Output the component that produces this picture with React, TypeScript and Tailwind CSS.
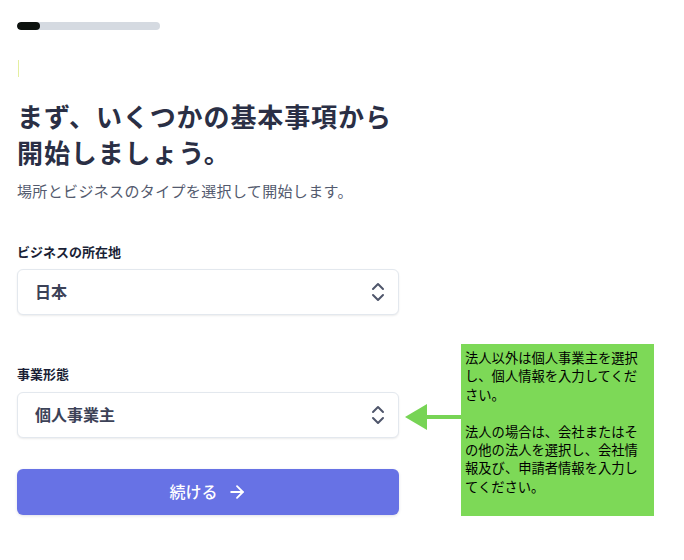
import { ArrowRight, ChevronsUpDown } from 'lucide-react';

const jp = "font-['Inter','Noto_Sans_CJK_JP',sans-serif]";

function SelectBox({ value }: { value: string }) {
  return (
    <div className="h-[46px] w-full rounded-md border border-[#e3e8ee] bg-white shadow-[0_1px_2px_rgba(0,0,0,0.08)] flex items-center justify-between pl-[17px] pr-[8px]">
      <span className="text-[16px] font-semibold text-[#3c4257]">{value}</span>
      <ChevronsUpDown className="w-[24px] h-[24px] text-[#4f566b]" strokeWidth={2} />
    </div>
  );
}

export default function App() {
  return (
    <div className={`relative w-[684px] h-[560px] bg-white overflow-hidden ${jp}`}>
      <div className="ml-[17px] w-[382px] pt-[22px] flex flex-col">
        {/* progress */}
        <div className="h-2 w-[143px] rounded-full bg-[#d5dae1] overflow-hidden">
          <div className="h-full w-[23px] rounded-full bg-[#0d120e]" />
        </div>

        <div className="mt-[30px] ml-px h-[17px] w-px bg-[#e4efa0]" />

        <h1 className="mt-[23px] text-[26px] leading-[36px] font-bold text-[#2a2f45] tracking-[0.9px]">
          まず、いくつかの基本事項から<br />開始しましょう。
        </h1>
        <p className="mt-[9px] text-[15px] leading-[22px] text-[#535a6e] tracking-[0.35px]">
          場所とビジネスのタイプを選択して開始します。
        </p>

        <label className="mt-[39px] text-[13px] leading-[20px] font-bold text-[#1a1f36]">ビジネスの所在地</label>
        <div className="mt-[7px]">
          <SelectBox value="日本" />
        </div>

        <label className="mt-[49px] text-[13px] leading-[20px] font-bold text-[#1a1f36]">事業形態</label>
        <div className="mt-2">
          <SelectBox value="個人事業主" />
        </div>

        <button className="mt-[31px] h-[46px] w-full rounded-md bg-[#6772e5] shadow-[0_1px_3px_rgba(50,50,93,0.15)] flex items-center justify-center gap-[9px] text-white text-[16px] font-medium">
          <span>続ける</span>
          <ArrowRight className="w-[20px] h-[20px]" strokeWidth={2.2} />
        </button>
      </div>

      {/* annotation arrow */}
      <svg className="absolute left-[404px] top-[403px]" width="58" height="28" viewBox="0 0 58 28">
        <polygon points="1,14 23,1 23,27" fill="#77d455" />
        <rect x="20" y="12" width="38" height="4" fill="#77d455" />
      </svg>

      {/* annotation note */}
      <div className="absolute left-[461px] top-[344px] w-[193px] h-[172px] bg-[#7dd957] pl-[4px] pt-[5px] text-[13.3px] leading-[18.4px] text-black font-['Noto_Sans_CJK_JP',sans-serif]">
        法人以外は個人事業主を選択<br />
        し、個人情報を入力してくだ<br />
        さい。<br />
        <br />
        法人の場合は、会社またはそ<br />
        の他の法人を選択し、会社情<br />
        報及び、申請者情報を入力し<br />
        てください。
      </div>
    </div>
  );
}
